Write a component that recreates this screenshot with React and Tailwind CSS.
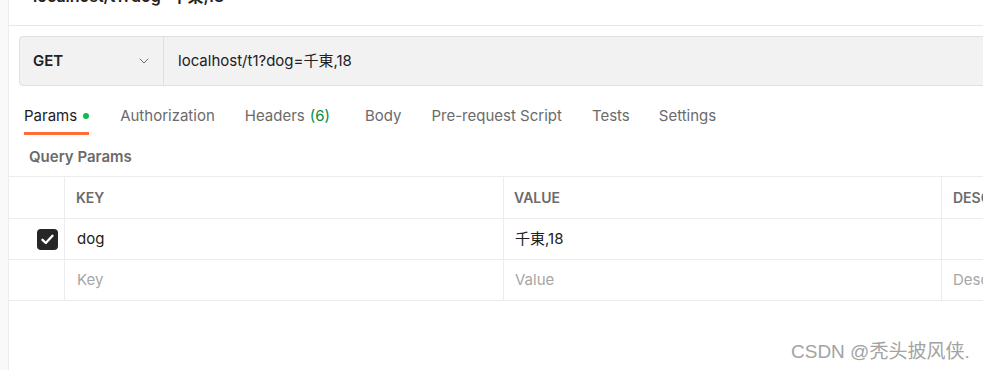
import { ChevronDown } from 'lucide-react';

const font = { fontFamily: 'Inter, "Noto Sans CJK SC", sans-serif' };

const Tab = ({ label, active, dot, count, extra = '' }) => (
  <div className={`flex shrink-0 flex-col ${extra}`}>
    <div className={`flex items-center h-[20px] text-[15px] leading-[20px] whitespace-nowrap ${active ? 'text-[#212121]' : 'text-[#6b6b6b]'}`}>
      {label}
      {count && <span className="ml-[5px] text-[#0a8a3f]">({count})</span>}
      {dot && <span className="ml-[6px] h-[6px] w-[6px] rounded-full bg-[#0cbb52]" />}
    </div>
    <div className={`mt-[6px] h-[3px] ${active ? 'bg-[#ff6c37]' : 'bg-transparent'}`} />
  </div>
);

const Check = () => (
  <div className="flex h-[21px] w-[21px] items-center justify-center rounded-[4px] bg-[#262626]">
    <svg width="13" height="11" viewBox="0 0 13 11" fill="none">
      <path d="M1.5 5.8 L4.8 9 L11.5 1.8" stroke="white" strokeWidth="2.4" strokeLinecap="round" strokeLinejoin="round" />
    </svg>
  </div>
);

const cell = 'flex shrink-0 items-center border-r border-[#ececec]';

export default function App() {
  return (
    <div className="relative flex h-[370px] w-[983px] overflow-hidden bg-white" style={font}>
      {/* left rail */}
      <div className="h-full w-[9px] shrink-0 border-r border-[#ececec] bg-[#f9f9f9]" />

      <div className="flex min-w-0 flex-1 flex-col">
        {/* request title, mostly scrolled out */}
        <div className="h-[26px] shrink-0 overflow-hidden border-b border-[#e8e8e8] pl-[24px]">
          <div className="-mt-[14px] text-[16px] font-semibold leading-[20px] text-[#212121] whitespace-nowrap">
            localhost/t1?dog=千東,18
          </div>
        </div>

        {/* url bar */}
        <div className="mt-[10px] pl-[10px]">
          <div className="flex h-[50px] w-[1000px] rounded-l-[4px] border border-[#e0e0e0] bg-[#f2f2f2]">
            <div className="flex w-[144px] shrink-0 items-center justify-between border-r border-[#e0e0e0] pl-[13px] pr-[11px]">
              <span className="text-[15px] font-semibold text-[#212121]">GET</span>
              <ChevronDown size={16} strokeWidth={1.5} className="text-[#6b6b6b]" />
            </div>
            <div className="flex items-center pl-[14px] text-[15px] text-[#212121]">
              localhost/t1?dog=千東,18
            </div>
          </div>
        </div>

        {/* tabs */}
        <div className="mt-[20px] flex pl-[15px]">
          <Tab label="Params" active dot />
          <Tab label="Authorization" extra="ml-[31px]" />
          <Tab label="Headers" count="6" extra="ml-[30px]" />
          <Tab label="Body" extra="ml-[35px]" />
          <Tab label="Pre-request Script" extra="ml-[30px]" />
          <Tab label="Tests" extra="ml-[30px]" />
          <Tab label="Settings" extra="ml-[29px]" />
        </div>

        <div className="mt-[12px] pl-[20px] text-[15px] font-semibold leading-[20px] text-[#6b6b6b]">
          Query Params
        </div>

        {/* params table */}
        <div className="mt-[9px] w-[1100px] border-t border-[#ececec] text-[14px]">
          <div className="flex h-[42px] border-b border-[#ececec]">
            <div className={`${cell} w-[56px]`} />
            <div className={`${cell} w-[439px] pl-[11px] font-semibold text-[#6b6b6b]`}>KEY</div>
            <div className={`${cell} w-[438px] pl-[10px] font-semibold text-[#6b6b6b]`}>VALUE</div>
            <div className="flex items-center pl-[11px] font-semibold text-[#6b6b6b]">DESCRIPTION</div>
          </div>
          <div className="flex h-[41px] border-b border-[#ececec]">
            <div className={`${cell} w-[56px] justify-end pr-[6px]`}>
              <Check />
            </div>
            <div className={`${cell} w-[439px] pl-[12px] text-[15px] text-[#212121]`}>dog</div>
            <div className={`${cell} w-[438px] pl-[11px] text-[15px] text-[#212121]`}>千東,18</div>
            <div className="flex items-center pl-[11px]" />
          </div>
          <div className="flex h-[41px] border-b border-[#ececec]">
            <div className={`${cell} w-[56px]`} />
            <div className={`${cell} w-[439px] pl-[12px] text-[15px] text-[#a6a6a6]`}>Key</div>
            <div className={`${cell} w-[438px] pl-[11px] text-[15px] text-[#a6a6a6]`}>Value</div>
            <div className="flex items-center pl-[11px] text-[15px] text-[#a6a6a6]">Description</div>
          </div>
        </div>
      </div>

      {/* watermark */}
      <div
        className="absolute left-[791px] top-[340px] text-[19px] leading-[24px] text-[#a3a3a3] whitespace-nowrap"
        style={{ fontFamily: '"Liberation Sans", "Noto Sans CJK SC", sans-serif', textShadow: '0 0 1px #fff' }}
      >
        CSDN @秃头披风侠.
      </div>
    </div>
  );
}
